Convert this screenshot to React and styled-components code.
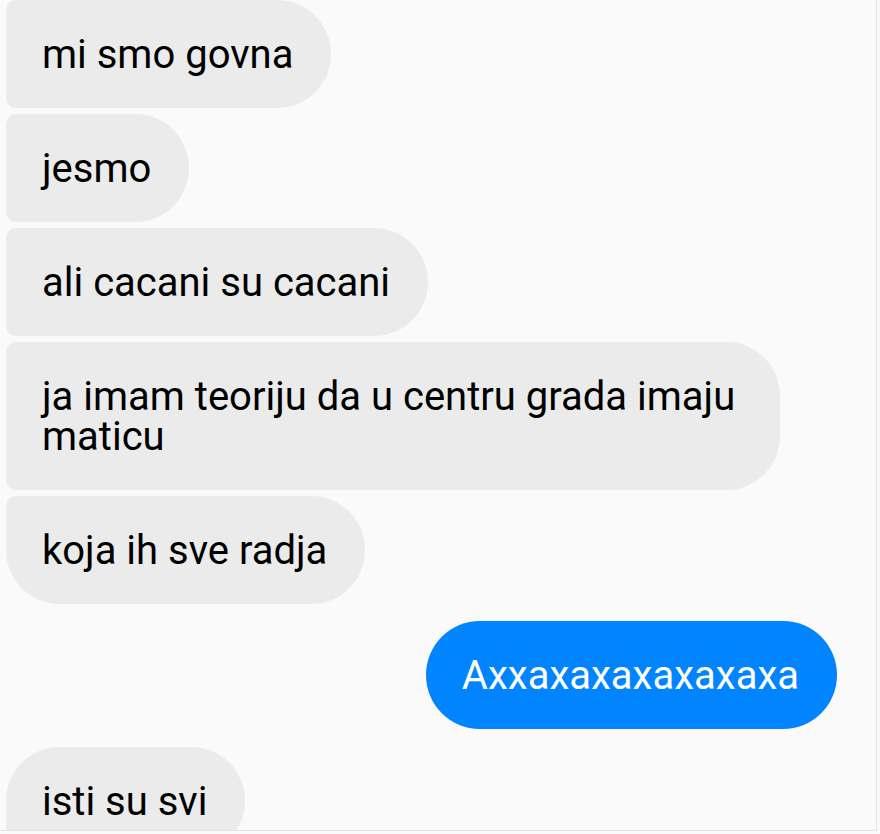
import React from 'react';
import styled, { createGlobalStyle } from 'styled-components';

const GlobalStyle = createGlobalStyle`
  html, body {
    margin: 0;
    padding: 0;
    background: #fafafa;
  }
  body {
    font-family: Roboto, "Noto Sans", sans-serif;
  }
`;

const Screen = styled.div`
  width: 876px;
  height: 830px;
  overflow: hidden;
  background: #fafafa;
  border-right: 1px solid #e4e4e4;
  border-bottom: 1px solid #e4e4e4;
  box-sizing: content-box;
`;

const Thread = styled.div`
  display: flex;
  flex-direction: column;
  gap: 6px;
  padding: 0 0 0 6px;
`;

const Row = styled.div`
  display: flex;
  justify-content: ${p => (p.mine ? 'flex-end' : 'flex-start')};
  padding-right: ${p => (p.mine ? '39px' : '0')};
  margin-top: ${p => p.spaced || 0}px;
`;

const Bubble = styled.div`
  max-width: 774px;
  box-sizing: border-box;
  padding: 35px 38px 33px 36px;
  font-size: 40px;
  line-height: 40px;
  color: ${p => (p.mine ? '#ffffff' : '#000000')};
  background: ${p => (p.mine ? '#0084ff' : '#ebebeb')};
  border-radius: ${p => p.radius};
`;

const BIG = '54px';
const SMALL = '10px';

const radiusFor = (pos) => {
  if (pos === 'first') return `${BIG} ${BIG} ${BIG} ${SMALL}`;
  if (pos === 'last') return `${SMALL} ${BIG} ${BIG} ${BIG}`;
  if (pos === 'single') return BIG;
  return `${SMALL} ${BIG} ${BIG} ${SMALL}`;
};

const messages = [
  { text: 'mi smo govna', pos: 'middle' },
  { text: 'jesmo', pos: 'middle' },
  { text: 'ali cacani su cacani', pos: 'middle' },
  { text: 'ja imam teoriju da u centru grada imaju maticu', pos: 'middle' },
  { text: 'koja ih sve radja', pos: 'last' },
  { text: 'Axxaxaxaxaxaxaxa', pos: 'single', mine: true, spaced: 11 },
  { text: 'isti su svi', pos: 'first', spaced: 12 },
];

const App = () => {
  return (
    <>
      <GlobalStyle />
      <Screen>
        <Thread>
          {messages.map((m, i) => (
            <Row key={i} mine={m.mine} spaced={m.spaced}>
              <Bubble mine={m.mine} radius={radiusFor(m.pos)}>
                {m.text}
              </Bubble>
            </Row>
          ))}
        </Thread>
      </Screen>
    </>
  );
};

export default App;
